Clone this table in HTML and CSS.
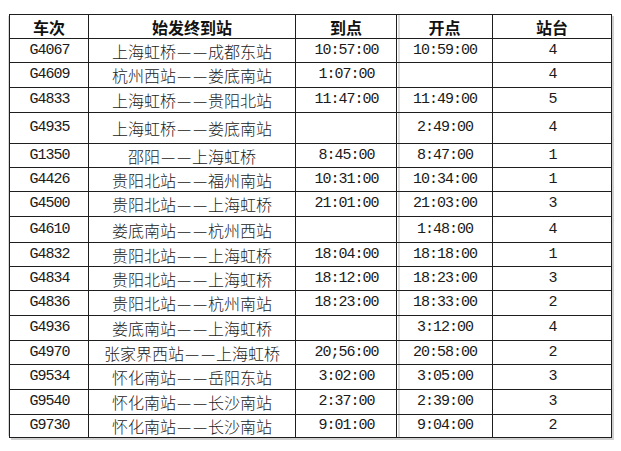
FILE: index.html
```html
<!DOCTYPE html>
<html lang="zh-CN">
<head>
<meta charset="utf-8">
<title>车次时刻表</title>
<link rel="stylesheet" href="styles.css">
</head>
<body>
<div class="sheet">
<table class="timetable">
  <colgroup>
    <col class="c-train"><col class="c-route"><col class="c-arr"><col class="c-dep"><col class="c-plat">
  </colgroup>
  <thead>
    <tr class="head"><th>车次</th><th>始发终到站</th><th>到点</th><th class="dep">开点</th><th>站台</th></tr>
  </thead>
  <tbody>
    <tr class="r24"><td class="num">G4067</td><td class="route">上海虹桥<span class="dash">—</span><span class="dash">—</span>成都东站</td><td class="num">10:57:00</td><td class="num dep">10:59:00</td><td class="num">4</td></tr>
    <tr><td class="num">G4609</td><td class="route">杭州西站<span class="dash">—</span><span class="dash">—</span>娄底南站</td><td class="num">1:07:00</td><td class="num dep"></td><td class="num">4</td></tr>
    <tr><td class="num">G4833</td><td class="route">上海虹桥<span class="dash">—</span><span class="dash">—</span>贵阳北站</td><td class="num">11:47:00</td><td class="num dep">11:49:00</td><td class="num">5</td></tr>
    <tr class="r31"><td class="num">G4935</td><td class="route">上海虹桥<span class="dash">—</span><span class="dash">—</span>娄底南站</td><td class="num"></td><td class="num dep">2:49:00</td><td class="num">4</td></tr>
    <tr class="r24"><td class="num">G1350</td><td class="route">邵阳<span class="dash">—</span><span class="dash">—</span>上海虹桥</td><td class="num">8:45:00</td><td class="num dep">8:47:00</td><td class="num">1</td></tr>
    <tr class="r24"><td class="num">G4426</td><td class="route">贵阳北站<span class="dash">—</span><span class="dash">—</span>福州南站</td><td class="num">10:31:00</td><td class="num dep">10:34:00</td><td class="num">1</td></tr>
    <tr><td class="num">G4500</td><td class="route">贵阳北站<span class="dash">—</span><span class="dash">—</span>上海虹桥</td><td class="num">21:01:00</td><td class="num dep">21:03:00</td><td class="num">3</td></tr>
    <tr class="r26"><td class="num">G4610</td><td class="route">娄底南站<span class="dash">—</span><span class="dash">—</span>杭州西站</td><td class="num"></td><td class="num dep">1:48:00</td><td class="num">4</td></tr>
    <tr class="r24"><td class="num">G4832</td><td class="route">贵阳北站<span class="dash">—</span><span class="dash">—</span>上海虹桥</td><td class="num">18:04:00</td><td class="num dep">18:18:00</td><td class="num">1</td></tr>
    <tr class="r24"><td class="num">G4834</td><td class="route">贵阳北站<span class="dash">—</span><span class="dash">—</span>上海虹桥</td><td class="num">18:12:00</td><td class="num dep">18:23:00</td><td class="num">3</td></tr>
    <tr><td class="num">G4836</td><td class="route">贵阳北站<span class="dash">—</span><span class="dash">—</span>杭州南站</td><td class="num">18:23:00</td><td class="num dep">18:33:00</td><td class="num">2</td></tr>
    <tr><td class="num">G4936</td><td class="route">娄底南站<span class="dash">—</span><span class="dash">—</span>上海虹桥</td><td class="num"></td><td class="num dep">3:12:00</td><td class="num">4</td></tr>
    <tr class="r24"><td class="num">G4970</td><td class="route">张家界西站<span class="dash">—</span><span class="dash">—</span>上海虹桥</td><td class="num">20;56:00</td><td class="num dep">20:58:00</td><td class="num">2</td></tr>
    <tr><td class="num">G9534</td><td class="route">怀化南站<span class="dash">—</span><span class="dash">—</span>岳阳东站</td><td class="num">3:02:00</td><td class="num dep">3:05:00</td><td class="num">3</td></tr>
    <tr><td class="num">G9540</td><td class="route">怀化南站<span class="dash">—</span><span class="dash">—</span>长沙南站</td><td class="num">2:37:00</td><td class="num dep">2:39:00</td><td class="num">3</td></tr>
    <tr class="r23"><td class="num">G9730</td><td class="route">怀化南站<span class="dash">—</span><span class="dash">—</span>长沙南站</td><td class="num">9:01:00</td><td class="num dep">9:04:00</td><td class="num">2</td></tr>
  </tbody>
</table>
</div>
</body>
</html>
```

FILE: styles.css
```css
html, body {
  margin: 0;
  padding: 0;
  background: #ffffff;
}
body {
  padding: 14px 0 0 9px;
  font-family: "Noto Sans CJK SC", "Liberation Sans", sans-serif;
  color: #1a1a1a;
}
.sheet {
  display: inline-block;
  box-shadow: 2px 2px 0 #d0d0d0, -3px 0 0 -2px #d8d8d8;
}
.timetable {
  border-collapse: collapse;
  table-layout: fixed;
  width: 602px;
}
.c-train { width: 79px; }
.c-route { width: 207px; }
.c-arr { width: 101px; }
.c-dep { width: 96px; }
.c-plat { width: 119px; }
.timetable th,
.timetable td {
  border: 1px solid #1e1e1e;
  padding: 0;
  text-align: center;
  vertical-align: middle;
  white-space: nowrap;
  overflow: hidden;
}
.timetable tr { height: 25px; }
.timetable tr.head { height: 24px; }
.timetable tr.r24 { height: 24px; }
.timetable tr.r23 { height: 23px; }
.timetable tr.r26 { height: 26px; }
.timetable tr.r31 { height: 31px; }
.timetable th {
  font-size: 16px;
  font-weight: 700;
  line-height: 20px;
  color: #111;
}
.timetable td.num {
  font-family: "Liberation Mono", "DejaVu Sans Mono", monospace;
  font-size: 15px;
  letter-spacing: -1px;
  line-height: 18px;
  color: #1a1a1a;
  padding-left: 1px;
}
.timetable td.route {
  font-size: 16px;
  line-height: 20px;
  color: #222;
  font-weight: 300;
}
.dash {
  display: inline-block;
  width: 16px;
  text-align: center;
  font-size: 16px;
  vertical-align: top;
  line-height: 20px;
}
.timetable .dep {
  background-image: linear-gradient(to right, transparent 1px, #b8b8b8 1px, #b8b8b8 2px, transparent 2px);
}
```
